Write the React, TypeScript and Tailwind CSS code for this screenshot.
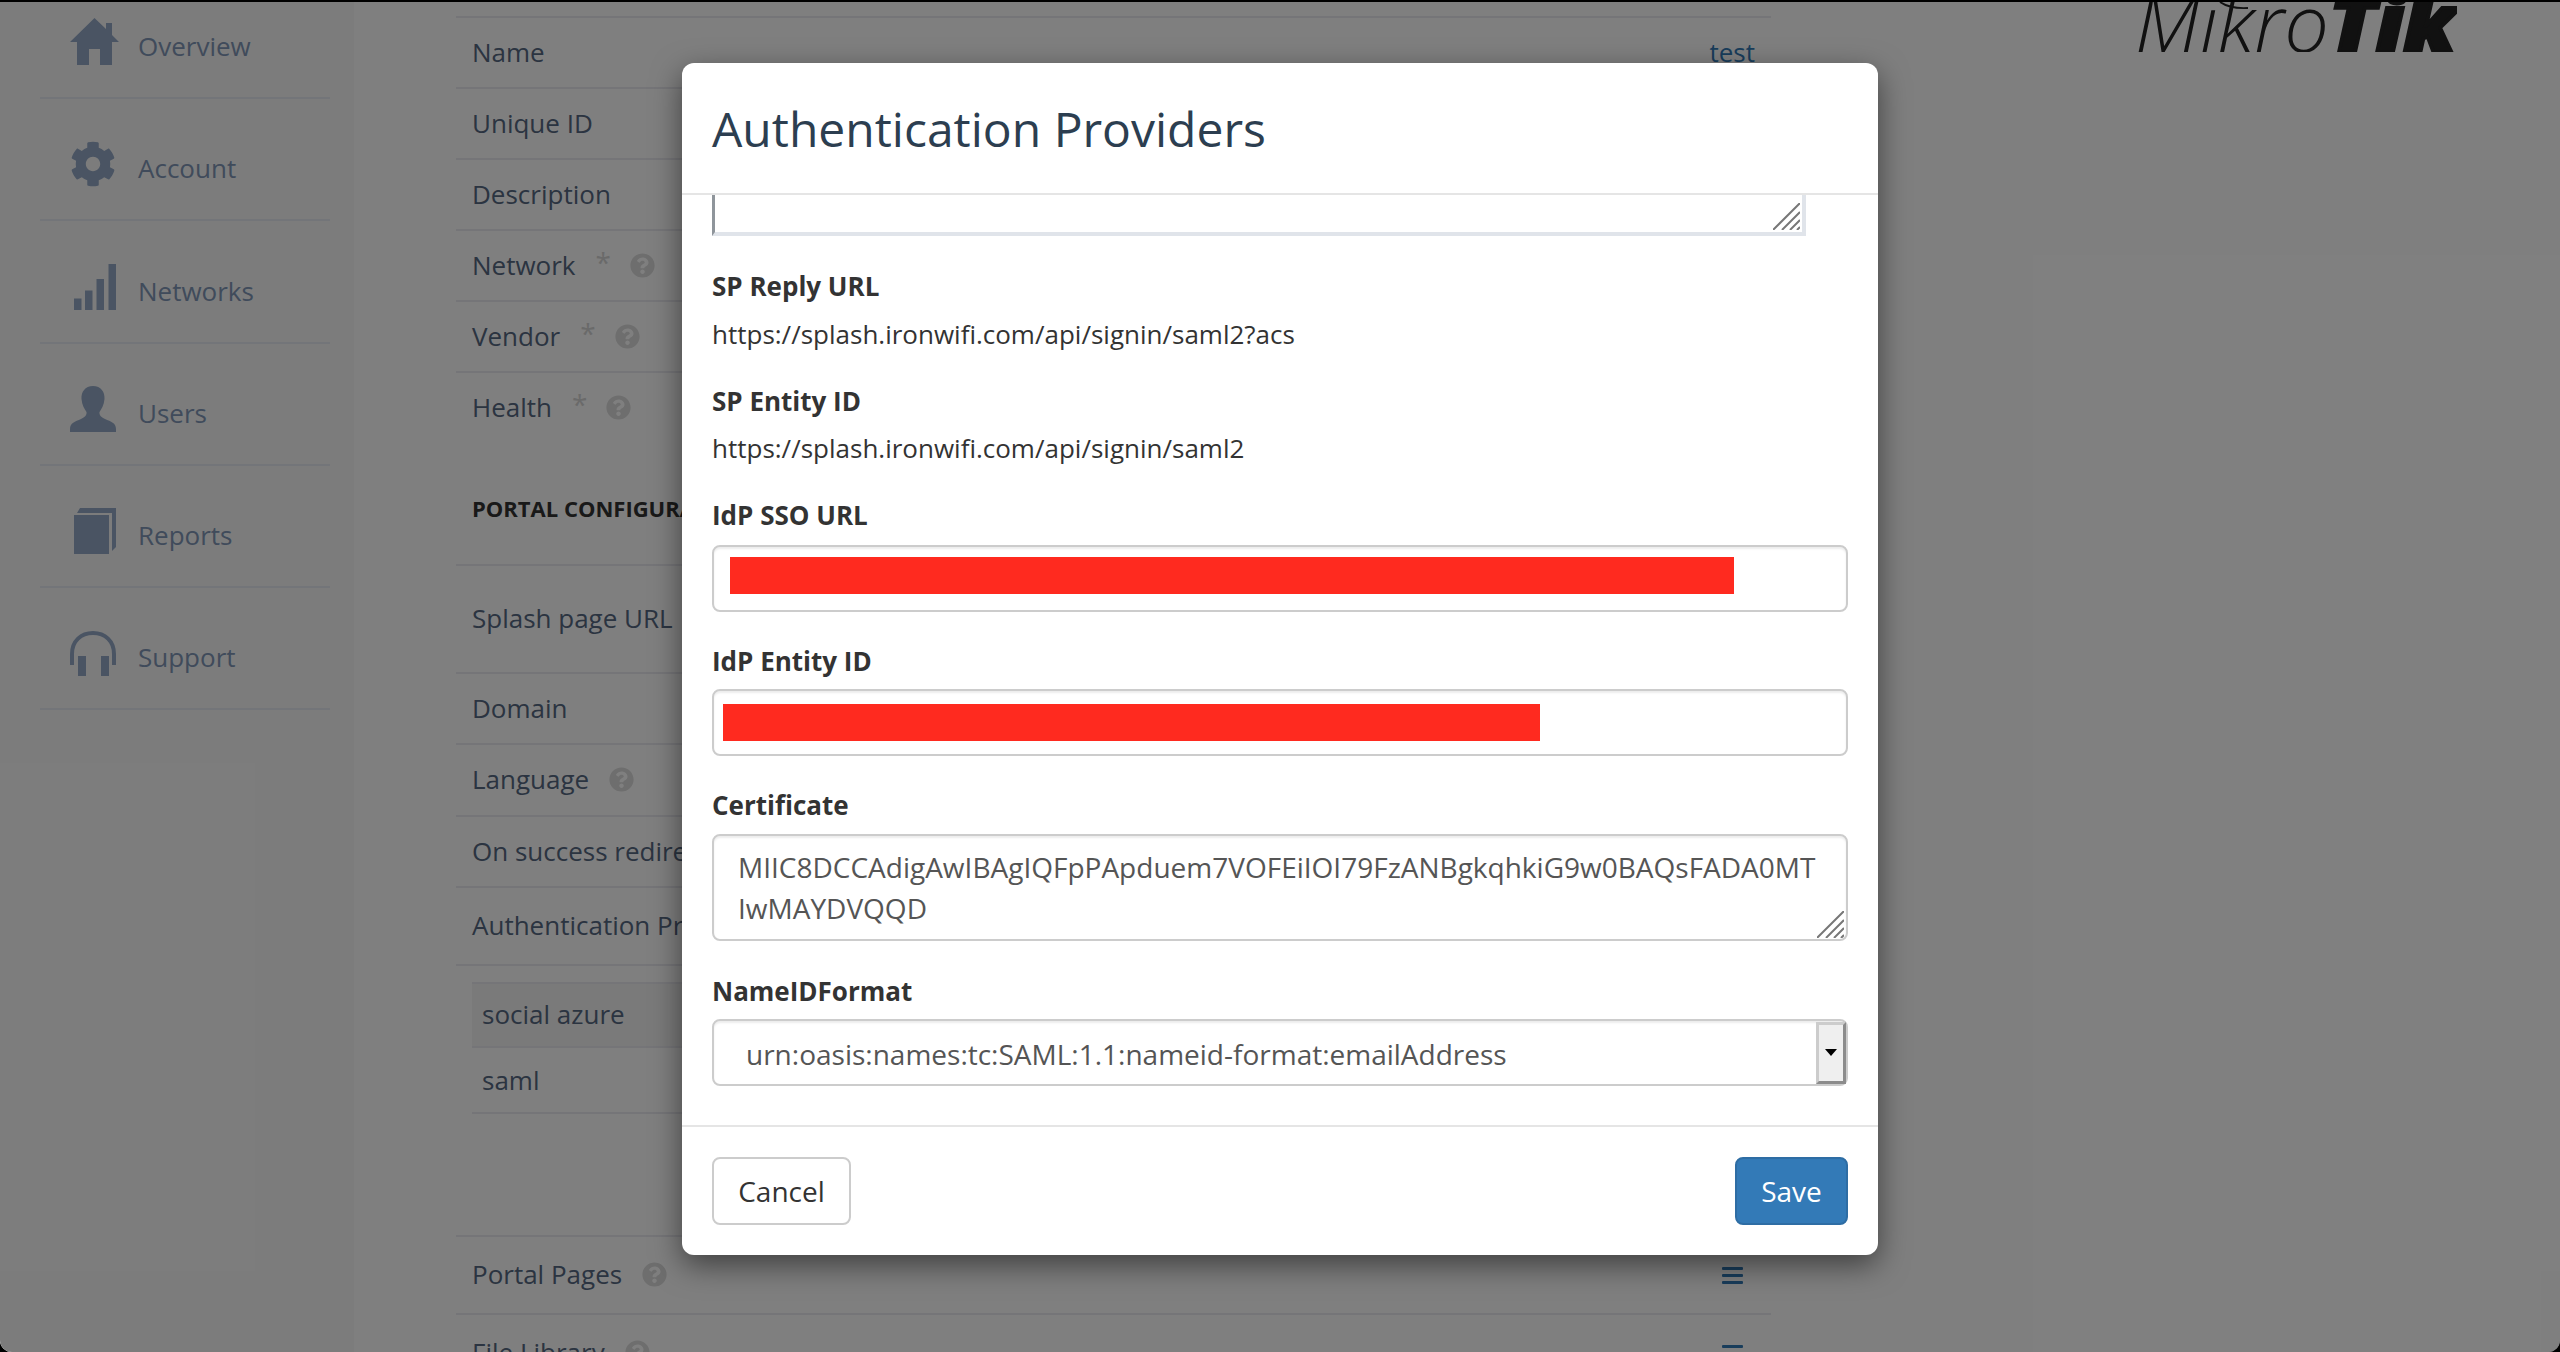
import React from "react";
import { FaCog, FaQuestionCircle } from "react-icons/fa";

const font = "font-['Open_Sans',sans-serif]";

const Grip = ({ pos }: { pos: string }) => (
  <svg width="27" height="27" viewBox="0 0 27 27" className={`absolute ${pos}`}>
    <path d="M0 27 L27 0 M9 27 L27 9 M17 27 L27 17 M24 27 L27 24" stroke="#777" strokeWidth="2" fill="none" />
  </svg>
);

const Help = () => <FaQuestionCircle className="text-[25px] text-[#dcdcdc]" />;
const Star = () => <span className="text-[#d4d4d4] text-[28px] leading-none mt-[-6px] -mr-[1px]">*</span>;

const Burger = () => (
  <div className="flex flex-col gap-[4px] w-[21px] mt-[1px]">
    <div className="h-[3px] rounded-[1px] bg-[#337ab7]" />
    <div className="h-[3px] rounded-[1px] bg-[#337ab7]" />
    <div className="h-[3px] rounded-[1px] bg-[#337ab7]" />
  </div>
);

const HomeIcon = () => (
  <svg width="49" height="47" viewBox="0 0 49 47" fill="#94a9c6">
    <path d="M24.5 0 L36 11 V5 H42 V17 L49 24 H42 V47 H30 V31 H19 V47 H7 V24 H0 Z" />
  </svg>
);
const BarsIcon = () => (
  <svg width="42" height="46" viewBox="0 0 42 46" fill="#94a9c6" className="ml-[4px]">
    <rect x="0" y="34.5" width="7.5" height="11.5" />
    <rect x="11" y="26.5" width="7.5" height="19.5" />
    <rect x="22.5" y="15" width="7.5" height="31" />
    <rect x="34.5" y="0" width="7.5" height="46" />
  </svg>
);
const UserIcon = () => (
  <svg width="46" height="46" viewBox="0 0 46 46" fill="#94a9c6">
    <path d="M23 0 C31 0 35 6 34.5 13 C34 19 31.5 23 29.5 26 C29 29 31 31 35 33 C41 35.5 46 37 46 43 V46 H0 V43 C0 37 5 35.5 11 33 C15 31 17 29 16.5 26 C14.5 23 12 19 11.5 13 C11 6 15 0 23 0 Z" />
  </svg>
);
const BookIcon = () => (
  <svg width="42" height="46" viewBox="0 0 42 46" fill="#94a9c6" className="ml-[4px]">
    <path d="M6 0 H42 V39 L38 43 V5 H3 Z" />
    <path d="M0 7 H35 V46 H0 Z" />
  </svg>
);
const HeadsetIcon = () => (
  <svg width="46" height="45" viewBox="0 0 46 45" fill="#94a9c6">
    <path d="M2 34 V23 C2 10 11 2 23 2 C35 2 44 10 44 23 V34" fill="none" stroke="#94a9c6" strokeWidth="4" />
    <rect x="8" y="25" width="8" height="20" />
    <rect x="31" y="25" width="8" height="20" />
  </svg>
);

const nav: [string, React.ReactNode, string][] = [
  ["Overview", <HomeIcon />, "h-[97px]"],
  ["Account", <FaCog className="text-[46px] text-[#94a9c6]" />, "h-[122px]"],
  ["Networks", <BarsIcon />, "h-[123px]"],
  ["Users", <UserIcon />, "h-[122px]"],
  ["Reports", <BookIcon />, "h-[122px]"],
  ["Support", <HeadsetIcon />, "h-[122px]"],
];

const Row = ({ children, h = "h-[71px]" }: { children: React.ReactNode; h?: string }) => (
  <div className={`${h} border-t-2 border-[#eaeaf0] flex items-center pb-[1px] pl-[16px] pr-[16px] gap-[20px] text-[26px] text-[#566882]`}>
    {children}
  </div>
);

const Label = ({ children, className }: { children: React.ReactNode; className: string }) => (
  <div className={`font-bold text-[#333] text-[26px] leading-[40px] pt-[1px] -mb-[1px] ${className}`}>{children}</div>
);

const Value = ({ children, className }: { children: React.ReactNode; className: string }) => (
  <div className={`text-[#333] text-[26px] leading-[40px] ${className}`}>{children}</div>
);

const RedInput = ({ pad, bar, className }: { pad: string; bar: string; className: string }) => (
  <div className={`h-[67px] border-2 border-[#ccc] rounded-[8px] bg-white shadow-[inset_0_2px_2px_rgba(0,0,0,0.075)] flex items-center ${pad} ${className}`}>
    <div className={`h-[37px] bg-[#ff2a1f] ${bar}`} />
  </div>
);

export default function App() {
  return (
    <div className={`${font} relative w-[2560px] h-[1352px] bg-black pt-[2px] overflow-hidden`}>
      <div className="relative h-[1350px] bg-white rounded-b-[12px] overflow-hidden flex">
        {/* Sidebar */}
        <aside className="w-[354px] shrink-0 bg-[#f9f9f9] pl-[40px] pr-[24px]">
          {nav.map(([label, icon, h]) => (
            <div key={label} className={`${h} border-b-2 border-[#e6ebf2] flex items-end pb-[32px] pl-[30px]`}>
              <div className="w-[68px] flex">{icon}</div>
              <span className="text-[26px] leading-[36px] text-[#8096b6] mb-[1px]">{label}</span>
            </div>
          ))}
        </aside>

        {/* Content */}
        <main className="ml-[102px] w-[1315px] shrink-0 pt-[14px]">
          <Row><span className="flex-1">Name</span><span className="text-[#337ab7]">test</span></Row>
          <Row>Unique ID</Row>
          <Row>Description</Row>
          <Row>Network <Star /> <Help /></Row>
          <Row>Vendor <Star /> <Help /></Row>
          <Row>Health <Star /> <Help /></Row>
          <div className="h-[122px] border-t-2 border-transparent flex items-center pt-[8px] pl-[16px] font-bold text-[22px] text-[#333]">PORTAL CONFIGURATION</div>
          <Row h="h-[108px]">Splash page URL</Row>
          <Row>Domain</Row>
          <Row h="h-[72px]">Language <Help /></Row>
          <Row>On success redirect</Row>
          <Row h="h-[78px]">Authentication Providers</Row>
          <div className="border-t-2 border-[#eaeaf0] pt-[16px] pl-[16px] pr-[10px] h-[271px]">
            <div className="h-[66px] bg-[#f5f5f5] border-t-2 border-b-2 border-[#eaeaf0] flex items-center pb-[2px] pl-[10px] text-[26px] text-[#566882]">social azure</div>
            <div className="h-[66px] border-b-2 border-[#eaeaf0] flex items-center pl-[10px] text-[26px] text-[#566882]">saml</div>
          </div>
          <Row h="h-[78px]"><span>Portal Pages</span> <Help /><span className="flex-1" /><span className="pr-[12px]"><Burger /></span></Row>
          <Row h="h-[78px]"><span>File Library</span> <Help /><span className="flex-1" /><span className="pr-[12px]"><Burger /></span></Row>
        </main>

        {/* Logo */}
        <div className="ml-[364px] w-[322px] h-[52px] overflow-hidden">
          <svg width="322" height="50" viewBox="0 0 322 50">
            <path d="M85 0 Q95 7 113 6" fill="none" stroke="#222" strokeWidth="2" />
            <g fontFamily="'Open Sans', sans-serif" fontStyle="italic" fill="#222">
              <text x="0" y="50" fontSize="80" fontWeight="300" textLength="194" lengthAdjust="spacingAndGlyphs">Mikro</text>
              <text x="194" y="50" fontSize="80" fontWeight="800" stroke="#222" strokeWidth="3.5" textLength="127" lengthAdjust="spacingAndGlyphs">Tik</text>
            </g>
          </svg>
        </div>

        {/* Backdrop and modal */}
        <div className="absolute inset-0 bg-black/50 flex justify-center pt-[61px]">
          <div className="w-[1196px] h-[1192px] bg-white rounded-[12px] shadow-[0_10px_30px_rgba(0,0,0,0.5)] flex flex-col overflow-hidden">
            <div className="h-[132px] shrink-0 border-b-2 border-[#e5e5e5] flex items-center pt-[2px] pl-[30px] text-[48px] text-[#2c3e50]">
              Authentication Providers
            </div>
            <div className="flex-1 overflow-hidden pl-[30px] pr-[30px] min-h-0">
              <div className="relative w-[1094px] h-[41px] border-l-[3px] border-l-[#8f959b] border-r-[4px] border-b-[4px] border-r-[#e0e4ea] border-b-[#e0e4ea]">
                <Grip pos="right-[2px] bottom-[2px]" />
              </div>
              <Label className="mt-[29px]">SP Reply URL</Label>
              <Value className="mt-[9px]">https://splash.ironwifi.com/api/signin/saml2?acs</Value>
              <Label className="mt-[26px]">SP Entity ID</Label>
              <Value className="mt-[8px]">https://splash.ironwifi.com/api/signin/saml2</Value>
              <Label className="mt-[26px]">IdP SSO URL</Label>
              <RedInput className="mt-[11px]" pad="pl-[16px] pb-[6px]" bar="w-[1004px]" />
              <Label className="mt-[28px]">IdP Entity ID</Label>
              <RedInput className="mt-[9px]" pad="pl-[9px]" bar="w-[817px]" />
              <Label className="mt-[28px]">Certificate</Label>
              <div className="relative mt-[10px] h-[107px]">
                <textarea
                  readOnly
                  value={"MIIC8DCCAdigAwIBAgIQFpPApduem7VOFEiIOI79FzANBgkqhkiG9w0BAQsFADA0MT\nIwMAYDVQQD"}
                  className="w-full h-full resize-none overflow-hidden whitespace-pre border-2 border-[#ccc] rounded-[8px] pl-[24px] pt-[11px] text-[28px] leading-[41px] text-[#555] shadow-[inset_0_2px_2px_rgba(0,0,0,0.075)] outline-none"
                />
                <Grip pos="right-[4px] bottom-[3px]" />
              </div>
              <Label className="mt-[29px]">NameIDFormat</Label>
              <div className="mt-[9px] h-[67px] border-2 border-[#ccc] rounded-[8px] flex items-center justify-between pl-[32px] text-[28px] text-[#555] shadow-[inset_0_2px_2px_rgba(0,0,0,0.075)]">
                <span className="pt-[2px]">urn:oasis:names:tc:SAML:1.1:nameid-format:emailAddress</span>
                <div className="w-[30px] h-[62px] bg-[#efefef] border-l-[3px] border-t-[3px] border-l-[#ccc] border-t-[#ccc] border-r-[3px] border-b-[3px] border-r-[#8c8c8c] border-b-[#8c8c8c] flex items-center justify-center">
                  <div className="w-0 h-0 border-l-[6px] border-r-[6px] border-t-[7px] border-l-transparent border-r-transparent border-t-black" />
                </div>
              </div>
            </div>
            <div className="h-[130px] shrink-0 border-t-2 border-[#e5e5e5] flex items-center justify-between px-[30px]">
              <button className="w-[139px] h-[68px] border-2 border-[#ccc] rounded-[8px] bg-white text-[28px] text-[#333]">Cancel</button>
              <button className="w-[113px] h-[68px] border-2 border-[#2e6da4] rounded-[8px] bg-[#337ab7] text-[28px] text-white">Save</button>
            </div>
          </div>
        </div>
      </div>
    </div>
  );
}
